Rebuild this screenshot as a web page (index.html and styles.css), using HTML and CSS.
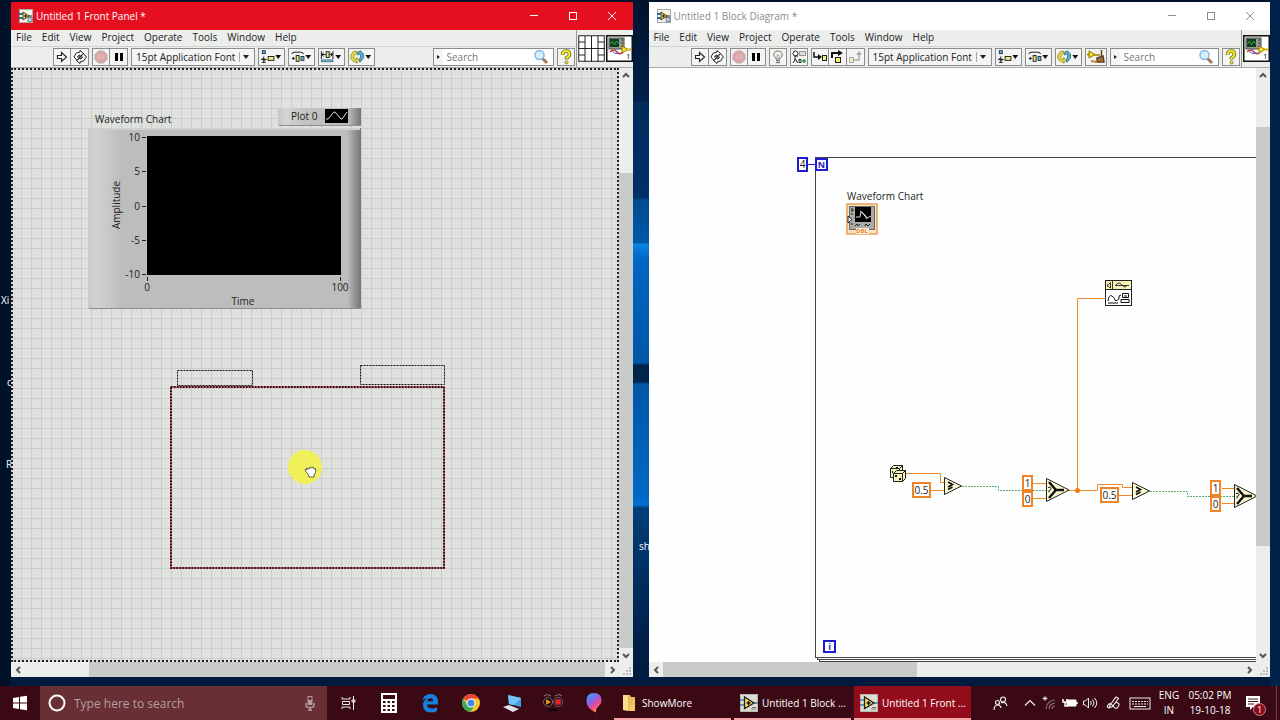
FILE: index.html
```
<!DOCTYPE html>
<html lang="en">
<head>
    <meta charset="UTF-8">
    <meta name="viewport" content="width=device-width, initial-scale=1.0">
    <title>LabVIEW</title>
    <link rel="stylesheet" href="styles.css">
</head>
<body>
    <!-- Shared icons -->
    <svg class="sprites" width="0" height="0" aria-hidden="true">
        <symbol id="vi-small" viewBox="0 0 14 14">
            <rect x="0.5" y="0.5" width="13" height="13" fill="#f4f4e8" stroke="#aaa"/>
            <path d="M0 5h4M0 9h4" stroke="#1d6fa5" stroke-width="2"/>
            <path d="M4 3v8l6-4z" fill="#ffd83a" stroke="#443"/>
            <path d="M5 7h3M6.500 5.500v3M9 7h4" stroke="#222"/>
            <rect x="9" y="8.500" width="4" height="4" fill="#bcd" stroke="#567" stroke-width="0.700"/>
        </symbol>
        <symbol id="run" viewBox="0 0 18 18">
            <path d="M4.500 7.500h4v-3l5 4.500-5 4.500v-3h-4z" fill="#fff" stroke="#222" stroke-width="1.200"/>
        </symbol>
        <symbol id="run-loop" viewBox="0 0 18 18">
            <path d="M3.500 8q1-4 5.500-4V2.500l3.500 3L9 8.500V7Q7 7 6.500 9H9l-3 3.500L3 9zM14.500 10q-1 4-5.500 4v1.500l-3.500-3L9 9.500V11q2 0 2.500-2H9.500l3-3.500L15.500 9z" fill="#fff" stroke="#222"/>
        </symbol>
        <symbol id="abort" viewBox="0 0 18 18">
            <path d="M6.500 3h5l3.500 3.500v5l-3.500 3.500h-5l-3.500-3.500v-5z" fill="#dba4a6" stroke="#bdaaaa"/>
            <path d="M5 9h8M6 7h6M6 11h6" stroke="#e4babb"/>
        </symbol>
        <symbol id="pause" viewBox="0 0 18 18">
            <path d="M5 5h3v8h-3zM10 5h3v8h-3z" fill="#000"/>
        </symbol>
        <symbol id="align" viewBox="0 0 28 18">
            <rect x="4.500" y="2.500" width="3" height="3" fill="#62c8dd" stroke="#234"/>
            <path d="M3 11.500h6M6 8.500v6M4.500 10l3 3M4 14.500h4" stroke="#111"/>
            <rect x="10.500" y="8.500" width="6" height="4" fill="#f4ee78" stroke="#222"/>
            <path d="M18 7h6l-3 4z" fill="#111"/>
        </symbol>
        <symbol id="distribute" viewBox="0 0 28 18">
            <path d="M4 6q0-2 3-2h6q3 0 3 2M4 10.500h3M5.500 9v3" fill="none" stroke="#111"/>
            <rect x="8.500" y="7.500" width="3" height="6" fill="#f4ee78" stroke="#222"/>
            <rect x="13.500" y="8.500" width="3" height="4" fill="#62c8dd" stroke="#234"/>
            <path d="M18 7h6l-3 4z" fill="#111"/>
        </symbol>
        <symbol id="resize" viewBox="0 0 28 18">
            <path d="M3.500 3v8M15.500 3v8M4 6.500h4M11 6.500h4M6 4.500l-2 2 2 2M13 4.500l2 2-2 2" fill="none" stroke="#111"/>
            <rect x="8.500" y="3.500" width="3" height="6" fill="#f4ee78" stroke="#222"/>
            <rect x="3.500" y="12" width="12" height="2" fill="#62c8dd" stroke="#356" stroke-width="0.700"/>
            <path d="M18 7h6l-3 4z" fill="#111"/>
        </symbol>
        <symbol id="reorder" viewBox="0 0 28 18">
            <path d="M9 3h-3l-3 4v4l3 3h3v1.500l2.500-3-2.500-3v2h-2l-1-2v-2l3-2z" fill="#e9df3c" stroke="#877d22" stroke-width="0.800"/>
            <path d="M10 4l3-1.500 3 3.500v4l-3 4h-1v-3l1-2v-2l-1-1-2 1z" fill="#4fb0c8" stroke="#286a7c" stroke-width="0.800"/>
            <path d="M18 7h6l-3 4z" fill="#111"/>
        </symbol>
        <symbol id="magnifier" viewBox="0 0 16 16">
            <path d="M9 9l5 5" stroke="#a87455" stroke-width="3"/>
            <circle cx="6.500" cy="6" r="4.500" fill="#d7effb" stroke="#83b7dc" stroke-width="1.500"/>
        </symbol>
        <symbol id="help" viewBox="0 0 18 18">
            <path d="M5.500 7q0-4 3.500-4t3.500 3.200q0 1.800-3 3.800v1.500" fill="none" stroke="#6c6c20" stroke-width="3.600"/>
            <path d="M5.500 7q0-4 3.500-4t3.500 3.200q0 1.800-3 3.800v1" fill="none" stroke="#f4ec26" stroke-width="2"/>
            <circle cx="9.500" cy="14.500" r="1.500" fill="#f4ec26" stroke="#6c6c20" stroke-width="0.800"/>
        </symbol>
        <symbol id="vi-icon" viewBox="0 0 27 27">
            <rect x="0.750" y="0.750" width="25.500" height="25.500" fill="#fff" stroke="#111" stroke-width="1.500"/>
            <rect x="3" y="3" width="15" height="11" fill="#9b9f93" stroke="#444"/>
            <rect x="4" y="4" width="9" height="8" fill="#0d3b1b"/>
            <path d="M4.500 9l2-3 2 4 2-4 2 3" fill="none" stroke="#35a83f"/>
            <path d="M15 5h2M15 8h2M15 11h2" stroke="#333"/>
            <path d="M4 17q4-4 7 0t7-1" fill="none" stroke="#d33c44" stroke-width="1.500"/>
            <path d="M6 15q2 5 8 3" fill="none" stroke="#4a61c4"/>
            <path d="M16 11v7l6-3.500z" fill="#ffe02a" stroke="#997a00"/>
            <path d="M21 14.500h4" stroke="#d8b400" stroke-width="2"/>
        </symbol>
        <symbol id="lv-task" viewBox="0 0 18 18">
            <rect x="0.500" y="0.500" width="17" height="17" fill="#deded4" stroke="#b7b7ae"/>
            <path d="M0 6h5M0 11h5M13 9h5" stroke="#3c83ad" stroke-width="1.500"/>
            <path d="M4.500 3v11.500l9.500-5.500z" fill="#ffdf60" stroke="#222" stroke-width="1.300"/>
            <path d="M6.500 9h4M8.500 7v4" stroke="#111" stroke-width="1.500"/>
            <path d="M11 15h5M12 13.500h4" stroke="#777"/>
        </symbol>
        <symbol id="caret-up" viewBox="0 0 14 14"><path d="M4 9l3-3 3 3" fill="none" stroke="#555" stroke-width="2"/></symbol>
        <symbol id="caret-down" viewBox="0 0 14 14"><path d="M4 6l3 3 3-3" fill="none" stroke="#555" stroke-width="2"/></symbol>
        <symbol id="caret-left" viewBox="0 0 14 14"><path d="M9 5l-3 3 3 3" fill="none" stroke="#555" stroke-width="2"/></symbol>
        <symbol id="caret-right" viewBox="0 0 14 14"><path d="M6 5l3 3-3 3" fill="none" stroke="#555" stroke-width="2"/></symbol>
        <symbol id="minimize" viewBox="0 0 10 10"><path d="M1 4.500h8" stroke="currentColor"/></symbol>
        <symbol id="maximize" viewBox="0 0 10 10"><rect x="1.500" y="1.500" width="7" height="7" fill="none" stroke="currentColor"/></symbol>
        <symbol id="close" viewBox="0 0 10 10"><path d="M1 1l8 8M9 1l-8 8" stroke="currentColor"/></symbol>
        <symbol id="compare" viewBox="0 0 18 18">
            <path d="M0.500 0.500l17 8.500-17 8.500z" fill="#fbf9cf" stroke="#222"/>
            <path d="M4 5l4.500 2.500-4.500 2.500M4 12.500l4.500-2.500" fill="none" stroke="#111" stroke-width="1.600"/>
        </symbol>
        <symbol id="select-node" viewBox="0 0 24 24">
            <path d="M0.500 0.500l22.500 11.500-22.500 11.500z" fill="#fbf9cf" stroke="#222"/>
            <path d="M3 4l7 8M3 20l7-8M8 12h10" fill="none" stroke="#111" stroke-width="2.500"/>
            <path d="M2 9.500q3-1 3 1t-2 2v2" fill="none" stroke="#222"/>
        </symbol>
    </svg>

    <main class="desktop">
        <span class="desktop-label label-xi">Xi</span>
        <span class="desktop-label label-c">c</span>
        <span class="desktop-label label-r">R</span>
        <span class="desktop-label label-sh">sh</span>

        <!-- Front panel -->
        <section class="window active">
            <header class="titlebar">
                <svg class="title-icon"><use href="#vi-small"/></svg>
                <h1>Untitled 1 Front Panel *</h1>
                <button aria-label="Minimize"><svg><use href="#minimize"/></svg></button>
                <button aria-label="Maximize"><svg><use href="#maximize"/></svg></button>
                <button aria-label="Close"><svg><use href="#close"/></svg></button>
            </header>
            <div class="window-head">
                <div class="bars">
                    <nav class="menubar">
                        <button>File</button>
                        <button>Edit</button>
                        <button>View</button>
                        <button>Project</button>
                        <button>Operate</button>
                        <button>Tools</button>
                        <button>Window</button>
                        <button>Help</button>
                    </nav>
                    <div class="toolbar">
                        <div class="tool-group">
                            <button class="tool" aria-label="Run"><svg><use href="#run"/></svg></button>
                            <button class="tool" aria-label="Run continuously"><svg><use href="#run-loop"/></svg></button>
                        </div>
                        <div class="tool-group">
                            <button class="tool" aria-label="Abort"><svg><use href="#abort"/></svg></button>
                            <button class="tool" aria-label="Pause"><svg><use href="#pause"/></svg></button>
                        </div>
                        <div class="font-box">
                            <select aria-label="Text settings"><option>15pt Application Font</option></select>
                        </div>
                        <button class="tool wide" aria-label="Align objects"><svg><use href="#align"/></svg></button>
                        <button class="tool wide" aria-label="Distribute objects"><svg><use href="#distribute"/></svg></button>
                        <button class="tool wide" aria-label="Resize objects"><svg><use href="#resize"/></svg></button>
                        <button class="tool wide" aria-label="Reorder"><svg><use href="#reorder"/></svg></button>
                        <div class="search-box">
                            <span class="search-arrow"></span>
                            <input type="search" placeholder="Search" aria-label="Search">
                            <svg><use href="#magnifier"/></svg>
                        </div>
                        <button class="tool" aria-label="Context help"><svg><use href="#help"/></svg></button>
                    </div>
                </div>
                <div class="icon-pane">
                    <svg viewBox="0 0 27 27">
                        <rect x="0.750" y="0.750" width="25.500" height="25.500" fill="#fff" stroke="#222"/>
                        <path d="M7 1v26M13.500 1v26M20 1v26M1 13.500h26M1 7h6M1 20h6M20 7h6M20 20h6" stroke="#222"/>
                    </svg>
                    <svg viewBox="0 0 27 27">
                        <use href="#vi-icon"/>
                        <text x="20" y="24" class="vi-number">1</text>
                    </svg>
                </div>
            </div>
            <div class="work">
                <div class="canvas panel-canvas">
                    <svg class="sheet">
                        <defs>
                            <linearGradient id="bevel" x1="0" x2="1" y1="0" y2="0">
                                <stop offset="0" stop-color="#c9cbc8"/>
                                <stop offset="0.030" stop-color="#d0d2cf"/>
                                <stop offset="0.080" stop-color="#c6c8c6"/>
                                <stop offset="0.120" stop-color="#bcbebc"/>
                                <stop offset="0.950" stop-color="#bcbebc"/>
                                <stop offset="0.980" stop-color="#8f918f"/>
                                <stop offset="1" stop-color="#747674"/>
                            </linearGradient>
                            <linearGradient id="bevel-legend" x1="0" x2="1" y1="0" y2="0">
                                <stop offset="0" stop-color="#c5c7c4"/>
                                <stop offset="0.100" stop-color="#d3d5d2"/>
                                <stop offset="0.300" stop-color="#c2c4c1"/>
                                <stop offset="0.850" stop-color="#b9bbb9"/>
                                <stop offset="1" stop-color="#747674"/>
                            </linearGradient>
                        </defs>

                        <text x="84" y="55">Waveform Chart</text>

                        <!-- plot legend -->
                        <rect x="267" y="40" width="83" height="18" fill="url(#bevel-legend)"/>
                        <path d="M268 57.500h82" stroke="#8f918f"/>
                        <text x="280" y="52">Plot 0</text>
                        <rect x="314" y="41" width="23" height="14" fill="#000"/>
                        <path d="M315 51l2 0 6-7 1 0 6 7 1 0 5-7" fill="none" stroke="#ddd"/>

                        <!-- chart -->
                        <rect x="77" y="60" width="273" height="181" fill="url(#bevel)"/>
                        <path d="M79 61h270" stroke="#cfd1cf" stroke-width="2"/>
                        <path d="M78 240.500h272" stroke="#8d8f8d"/>
                        <rect x="136" y="68" width="194" height="139" fill="#000"/>
                        <path d="M131 69.500h4M131 103.500h4M131 138.500h4M131 172.500h4M131 206.500h4M136.500 209v4M329.500 209v4" stroke="#222"/>
                        <g text-anchor="end">
                            <text x="129" y="73">10</text>
                            <text x="129" y="107">5</text>
                            <text x="129" y="142">0</text>
                            <text x="129" y="176">-5</text>
                            <text x="129" y="210">-10</text>
                        </g>
                        <g text-anchor="middle">
                            <text x="136" y="223">0</text>
                            <text x="329" y="223">100</text>
                            <text x="232" y="237">Time</text>
                            <text transform="translate(109 137) rotate(-90)">Amplitude</text>
                        </g>

                        <!-- outline of the chart being dragged -->
                        <g fill="none" stroke="#111" stroke-dasharray="2 1">
                            <rect x="166.500" y="302.500" width="75" height="15"/>
                            <rect x="349.500" y="297.500" width="84" height="19"/>
                        </g>
                        <rect x="160" y="319" width="273" height="181" fill="none" stroke="#c4616a" stroke-width="2"/>
                        <rect x="160" y="319" width="273" height="181" fill="none" stroke="#221012" stroke-width="2" stroke-dasharray="1.500 1.500"/>

                        <circle cx="294" cy="399" r="17" fill="#f0f05a"/>
                        <path d="M295 404q-2-3 0-3l1 1v-2l2 1 1-2 2 1 1-1 1 2 2 0q0 4-2 6v2h-5q0-3-3-5z" fill="#fff" stroke="#333" stroke-width="0.800"/>
                    </svg>
                </div>
                <div class="vscroll">
                    <button aria-label="Scroll up"><svg><use href="#caret-up"/></svg></button>
                    <div class="track"><span class="gap-left-v"></span><span class="thumb fill"></span></div>
                    <button aria-label="Scroll down"><svg><use href="#caret-down"/></svg></button>
                </div>
            </div>
            <div class="hscroll">
                <button aria-label="Scroll left"><svg><use href="#caret-left"/></svg></button>
                <div class="track"><span class="gap-left-h"></span><span class="thumb fill"></span></div>
                <button aria-label="Scroll right"><svg><use href="#caret-right"/></svg></button>
                <svg class="grip" viewBox="0 0 14 14"><path d="M10 5h2v2h-2zM7 8h2v2h-2zM10 8h2v2h-2zM4 11h2v2h-2zM7 11h2v2h-2zM10 11h2v2h-2z" fill="#bbb"/></svg>
            </div>
        </section>

        <!-- Block diagram -->
        <section class="window">
            <header class="titlebar">
                <svg class="title-icon"><use href="#vi-small"/></svg>
                <h1>Untitled 1 Block Diagram *</h1>
                <button aria-label="Minimize"><svg><use href="#minimize"/></svg></button>
                <button aria-label="Maximize"><svg><use href="#maximize"/></svg></button>
                <button aria-label="Close"><svg><use href="#close"/></svg></button>
            </header>
            <div class="window-head">
                <div class="bars">
                    <nav class="menubar">
                        <button>File</button>
                        <button>Edit</button>
                        <button>View</button>
                        <button>Project</button>
                        <button>Operate</button>
                        <button>Tools</button>
                        <button>Window</button>
                        <button>Help</button>
                    </nav>
                    <div class="toolbar">
                        <div class="tool-group">
                            <button class="tool" aria-label="Run"><svg><use href="#run"/></svg></button>
                            <button class="tool" aria-label="Run continuously"><svg><use href="#run-loop"/></svg></button>
                        </div>
                        <div class="tool-group">
                            <button class="tool" aria-label="Abort"><svg><use href="#abort"/></svg></button>
                            <button class="tool" aria-label="Pause"><svg><use href="#pause"/></svg></button>
                        </div>
                        <button class="tool" aria-label="Highlight execution">
                            <svg viewBox="0 0 18 18">
                                <path d="M7 11q0-1-2-3-1-5 4-5t4 5q-2 2-2 3z" fill="#f3f3ea" stroke="#777"/>
                                <path d="M7 12.500h4M7 14.500h4" stroke="#888" stroke-width="1.500"/>
                                <path d="M8 10l0-3h2v3" fill="none" stroke="#aaa"/>
                            </svg>
                        </button>
                        <button class="tool" aria-label="Retain wire values">
                            <svg viewBox="0 0 18 18">
                                <circle cx="5.500" cy="5.500" r="2.500" fill="#fff" stroke="#222"/>
                                <rect x="9.500" y="3.500" width="6" height="4" fill="#ddd" stroke="#999"/>
                                <path d="M5 8v4M3 15l2.500-4 2 4M9 11.500h2v3h-2zM5 8h3" fill="none" stroke="#222"/>
                                <path d="M12 13h4M14 11v4" stroke="#2d9f3c" stroke-width="1.500"/>
                            </svg>
                        </button>
                        <div class="tool-group">
                            <button class="tool" aria-label="Step into">
                                <svg viewBox="0 0 18 18">
                                    <path d="M3 4v5h5" fill="none" stroke="#111" stroke-width="1.500"/><path d="M7 6l4 3-4 3z" fill="#111"/>
                                    <rect x="11.500" y="7.500" width="4" height="5" fill="#f4ee78" stroke="#222"/>
                                </svg>
                            </button>
                            <button class="tool" aria-label="Step over">
                                <svg viewBox="0 0 18 18">
                                    <path d="M4 10v-5h7" fill="none" stroke="#111" stroke-width="2"/><path d="M10 2l5 3-5 3z" fill="#111"/>
                                    <rect x="7.500" y="9.500" width="5" height="5" fill="#f4ee78" stroke="#222"/>
                                </svg>
                            </button>
                            <button class="tool" aria-label="Step out">
                                <svg viewBox="0 0 18 18">
                                    <path d="M8 12h5v-6" fill="none" stroke="#aaa" stroke-width="1.500"/><path d="M10 7l3-4 3 4z" fill="#aaa"/>
                                    <rect x="3.500" y="9.500" width="4" height="5" fill="#eeeabf" stroke="#aaa"/>
                                </svg>
                            </button>
                        </div>
                        <div class="font-box">
                            <select aria-label="Text settings"><option>15pt Application Font</option></select>
                        </div>
                        <button class="tool wide" aria-label="Align objects"><svg><use href="#align"/></svg></button>
                        <button class="tool wide" aria-label="Distribute objects"><svg><use href="#distribute"/></svg></button>
                        <button class="tool wide" aria-label="Reorder"><svg><use href="#reorder"/></svg></button>
                        <button class="tool cleanup" aria-label="Clean up diagram">
                            <svg viewBox="0 0 22 18">
                                <path d="M4 3v7l6-3.500z" fill="#ffe02a" stroke="#8b7200"/>
                                <path d="M2 6.500h3M9 7h6" stroke="#a58400" stroke-width="1.500"/>
                                <path d="M16.500 2l0 7M12 10l6-2 1 6h-7z" fill="#9a7445" stroke="#5d4020" stroke-width="1.500"/>
                                <path d="M6 13l6 1" stroke="#c08a4a" stroke-width="2"/>
                            </svg>
                        </button>
                        <div class="search-box">
                            <span class="search-arrow"></span>
                            <input type="search" placeholder="Search" aria-label="Search">
                            <svg><use href="#magnifier"/></svg>
                        </div>
                        <button class="tool" aria-label="Context help"><svg><use href="#help"/></svg></button>
                    </div>
                </div>
                <div class="icon-pane">
                    <svg viewBox="0 0 27 27">
                        <use href="#vi-icon"/>
                        <text x="20" y="24" class="vi-number">1</text>
                    </svg>
                </div>
            </div>
            <div class="work">
                <div class="canvas">
                    <svg class="sheet">
                        <!-- for loop -->
                        <g fill="#fdfefd" stroke="#444">
                            <rect x="170.500" y="93.500" width="900" height="500"/>
                            <rect x="168.500" y="91.500" width="900" height="500"/>
                            <rect x="166.500" y="89.500" width="900" height="500"/>
                        </g>
                        <path d="M159 96.500h8" stroke="#1c1ccc"/>
                        <g fill="#fff" stroke="#1c1ccc" stroke-width="2">
                            <rect x="149" y="90" width="9" height="13"/>
                            <rect x="167" y="91" width="11" height="11"/>
                            <rect x="175" y="573" width="11" height="11"/>
                        </g>
                        <g text-anchor="middle">
                            <text x="153.500" y="100">4</text>
                            <text class="terminal" x="172.500" y="100">N</text>
                            <text class="terminal" x="180.500" y="582">i</text>
                        </g>

                        <!-- chart terminal -->
                        <text x="198" y="132">Waveform Chart</text>
                        <rect x="198" y="136" width="30" height="30" fill="#fbe3bf" stroke="#e8a055" stroke-width="1.500"/>
                        <rect x="200.500" y="138.500" width="25" height="23" fill="#aaa" stroke="#666"/>
                        <rect x="206" y="139" width="16" height="15" fill="#000"/>
                        <path d="M207 149h4l1-5 4 3 2 3 4-2M211 143l3 2 4 6" fill="none" stroke="#ddd"/>
                        <path d="M199 148l4 3.500-4 3.500z" fill="#fff" stroke="#222"/>
                        <path d="M202 141h2v2h-2M202 146h2M202 156h2M206 158l2-2 1 2 2-2M216 158l1-2 2 2 2-2" fill="none" stroke="#222"/>
                        <rect x="207" y="160" width="13" height="6" fill="#fdefd8"/>
                        <text class="dbl" x="213" y="165" text-anchor="middle">DBL</text>

                        <!-- express vi -->
                        <rect x="456.500" y="212.500" width="26" height="25" fill="#fff" stroke="#222"/>
                        <rect x="456.500" y="212.500" width="26" height="9" fill="#f6f3b4" stroke="#222"/>
                        <path d="M463.500 213v8M461.500 214.500l-2 2h-1v2h1l2 1.500zM466 217.500h14M467 217q3-4 6 0t5 0" fill="none" stroke="#333"/>
                        <path d="M459 233q1-7 4-5t3 4 4-1v-3l2-1M459 235h10M473.500 225.500h6v4h-6zM472 231.500h8v3h-8zM475 228h3" fill="none" stroke="#111"/>

                        <!-- numeric wires -->
                        <g fill="none" stroke="#f08a2c">
                            <path d="M257 405.500h34.500v9h4"/>
                            <path d="M282 422.500h13M384 415.500h14M384 430.500h14"/>
                            <path d="M420 422.500h28.500v-6h25v3h10M428.500 422v-191.500h28"/>
                            <path d="M470 427.500h13M573 420.500h13M573 435.500h13"/>
                        </g>
                        <circle cx="428.500" cy="422.500" r="2.500" fill="#f07a18"/>

                        <!-- boolean wires -->
                        <g fill="none" stroke="#5cab6c" stroke-dasharray="2 1">
                            <path d="M313 418.500h36.500v4h48"/>
                            <path d="M501 423.500h37.500v5h48"/>
                        </g>

                        <!-- random number -->
                        <g fill="#f5f2bd" stroke="#222">
                            <path d="M241.500 400.500l3-3h9v9l-3 3h-9z"/>
                            <path d="M241.500 400.500h9v9M250.500 400.500l3-3" fill="none"/>
                            <path d="M244.500 405.500l3-3h9v8l-3 3h-9z"/>
                            <path d="M244.500 405.500h9v8M253.500 405.500l3-3" fill="none"/>
                        </g>
                        <path d="M246 407h2v2h-2zM250 410h2v2h-2zM247 399h2v1h-2zM243 403h1v2h-1z" fill="#111"/>

                        <!-- constants -->
                        <g fill="#fff" stroke="#ee8425" stroke-width="2">
                            <rect x="264" y="415" width="17" height="14"/>
                            <rect x="452" y="420" width="17" height="14"/>
                            <rect x="374" y="408" width="9" height="14"/>
                            <rect x="374" y="424" width="9" height="14"/>
                            <rect x="562" y="413" width="9" height="14"/>
                            <rect x="562" y="429" width="9" height="14"/>
                        </g>
                        <g text-anchor="middle">
                            <text x="272.500" y="426">0.5</text>
                            <text x="460.500" y="431">0.5</text>
                            <text x="378.500" y="419">1</text>
                            <text x="378.500" y="435">0</text>
                            <text x="566.500" y="424">1</text>
                            <text x="566.500" y="440">0</text>
                        </g>

                        <use href="#compare" x="295" y="409" width="18" height="18"/>
                        <use href="#compare" x="483" y="414" width="18" height="18"/>
                        <use href="#select-node" x="397" y="410" width="24" height="24"/>
                        <use href="#select-node" x="585" y="416" width="24" height="24"/>
                    </svg>
                </div>
                <div class="vscroll">
                    <button aria-label="Scroll up"><svg><use href="#caret-up"/></svg></button>
                    <div class="track"><span class="gap-right-v"></span><span class="thumb thumb-right-v"></span></div>
                    <button aria-label="Scroll down"><svg><use href="#caret-down"/></svg></button>
                </div>
            </div>
            <div class="hscroll">
                <button aria-label="Scroll left"><svg><use href="#caret-left"/></svg></button>
                <div class="track"><span class="thumb thumb-right-h"></span></div>
                <button aria-label="Scroll right"><svg><use href="#caret-right"/></svg></button>
                <svg class="grip" viewBox="0 0 14 14"><path d="M10 5h2v2h-2zM7 8h2v2h-2zM10 8h2v2h-2zM4 11h2v2h-2zM7 11h2v2h-2zM10 11h2v2h-2z" fill="#bbb"/></svg>
            </div>
        </section>
    </main>

    <footer class="taskbar">
        <button class="start" aria-label="Start">
            <svg viewBox="0 0 16 16"><path d="M1 3l6-1v5.500H1zM8 1.800l7-1v6.700H8zM1 8.500h6V14l-6-1zM8 8.500h7v6.700l-7-1z" fill="#fff"/></svg>
        </button>
        <div class="task-search">
            <svg viewBox="0 0 18 18"><circle cx="9" cy="9" r="7.500" fill="none" stroke="#fff" stroke-width="2"/></svg>
            <input type="text" placeholder="Type here to search" aria-label="Type here to search">
            <svg viewBox="0 0 18 18">
                <path d="M7 2.500h4v8h-4z" fill="none" stroke="#b59ca0"/>
                <path d="M7 6h4v5h-4z" fill="#b59ca0"/>
                <path d="M5 9v2q0 2.500 4 2.500t4-2.500v-2M9 14v2M7 16h4" fill="none" stroke="#b59ca0" stroke-width="1.500"/>
            </svg>
        </div>
        <div class="pinned">
            <button aria-label="Task view">
                <svg viewBox="0 0 20 20"><path d="M4 4v2h8v-2M4 16v-2h8v2M4.500 8.500h7v3h-7zM15.500 3v14M14 7h3v2h-3z" fill="none" stroke="#eee"/></svg>
            </button>
            <button aria-label="Calculator">
                <svg viewBox="0 0 20 20">
                    <rect x="2" y="0" width="16" height="20" fill="#fff"/>
                    <path d="M4 2h12v4h-12z" fill="#3a0913"/>
                    <path d="M4 9h2.500M8.500 9h2.500M13 9h2.500M4 13h2.500M8.500 13h2.500M13 13h2.500M4 17h2.500M8.500 17h2.500M13 17h2.500" stroke="#3a0913" stroke-width="2"/>
                </svg>
            </button>
            <button aria-label="Edge">
                <svg viewBox="0 0 20 20"><path d="M2 9q1-8 8.500-8 7.500 0 7.500 8v2.500h-11q0 4 5 4 3 0 5-1.500v4q-2 1.500-6 1.500-8 0-8-8 0-4 4-6-5 0-5 3.500zM7.200 8.300h6q0-3-3-3-2.500 0-3 3z" fill="#1580dd" fill-rule="evenodd"/></svg>
            </button>
            <button aria-label="Chrome">
                <svg viewBox="0 0 20 20">
                    <circle cx="10" cy="10" r="9" fill="#fbc52c"/>
                    <path d="M10 10L2.200 5.500A9 9 0 0 1 17.800 5.500H10z" fill="#e5443a"/>
                    <path d="M2.200 5.500A9 9 0 0 0 9.500 19L14 12l-8 0z" fill="#3aa757"/>
                    <circle cx="10" cy="10" r="4.500" fill="#fff"/><circle cx="10" cy="10" r="3.500" fill="#4387ed"/>
                </svg>
            </button>
            <button aria-label="This PC">
                <svg viewBox="0 0 20 20"><path d="M6 2l13 3v9l-12-3z" fill="#3da3e5"/><path d="M1 14l6-2 10 4-6 3z" fill="#dfe3e7"/><path d="M6 2l13 3-7 7-5-1z" fill="#6fc6f6"/></svg>
            </button>
            <button aria-label="Recorder">
                <svg viewBox="0 0 20 20">
                    <circle cx="5" cy="9" r="4.500" fill="#20090c" stroke="#6f6266"/><circle cx="15" cy="9" r="4.500" fill="#20090c" stroke="#6f6266"/>
                    <path d="M3 6l5 3-5 3z" fill="#f28a24"/><circle cx="15" cy="9" r="3" fill="#e3242a"/>
                    <path d="M1 3q3-3 7 0M12 3q4-3 7 0" fill="none" stroke="#8d7a7d"/>
                    <path d="M3 16q4 2 7-1 3 3 7 1-4 4-7 1-3 3-7-1z" fill="#080305"/>
                </svg>
            </button>
            <button aria-label="Paint 3D">
                <svg viewBox="0 0 20 20">
                    <defs><linearGradient id="drop" x1="0" y1="0" x2="0.600" y2="1"><stop offset="0" stop-color="#25b8ef"/><stop offset="0.450" stop-color="#8b62ea"/><stop offset="0.750" stop-color="#f4488c"/><stop offset="1" stop-color="#ffa038"/></linearGradient></defs>
                    <path d="M10 0q7.500 0 7.500 7.500c0 5-6 6-5.500 12-7-3-9.500-7-9.500-12q0-7.500 7.500-7.500z" fill="url(#drop)"/>
                </svg>
            </button>
        </div>
        <div class="tasks">
            <button class="task">
                <svg viewBox="0 0 18 18"><path d="M3 1h7l1 2h4v13H3z" fill="#e9bd55"/><path d="M3 1h5v16l-5-1z" fill="#f8dc8b"/><path d="M8 17h7V5" fill="#f2cc69"/></svg>
                <span>ShowMore</span>
            </button>
            <button class="task">
                <svg><use href="#lv-task"/></svg>
                <span>Untitled 1 Block ...</span>
            </button>
            <button class="task current">
                <svg><use href="#lv-task"/></svg>
                <span>Untitled 1 Front ...</span>
            </button>
        </div>
        <div class="tray">
            <button class="people" aria-label="People">
                <svg viewBox="0 0 16 16"><path d="M2 15q0-5 4-5 2.500 0 3 3M9 8q5-2 6 3" fill="none" stroke="#eee" stroke-width="1.200"/><circle cx="5.500" cy="7.500" r="2" fill="none" stroke="#eee" stroke-width="1.200"/><circle cx="11" cy="4.500" r="2.500" fill="none" stroke="#eee" stroke-width="1.200"/></svg>
            </button>
            <button aria-label="Show hidden icons">
                <svg viewBox="0 0 16 16"><path d="M3 10.500l5-5 5 5" fill="none" stroke="#eee" stroke-width="1.200"/></svg>
            </button>
            <button aria-label="Network">
                <svg viewBox="0 0 16 16"><path d="M4 14a9 9 0 0 1 9-9M7 14a6 6 0 0 1 6-6M10 14a3 3 0 0 1 3-3" fill="none" stroke="#8e7479" stroke-width="1.200"/><path d="M3 1v5M0.500 3.500h5M1.500 2l3 3M4.500 2l-3 3" stroke="#eee" stroke-width="0.800"/></svg>
            </button>
            <button aria-label="Battery">
                <svg viewBox="0 0 16 16"><path d="M5 5h9v6h-9z" fill="#fff" stroke="#fff"/><path d="M15 7v2M1 4v3h4v-3M3 7v4h3" fill="none" stroke="#fff" stroke-width="1.500"/></svg>
            </button>
            <button aria-label="Volume">
                <svg viewBox="0 0 16 16"><path d="M1.500 6h2l3-3v10l-3-3h-2zM8.500 6q1.500 2 0 4M10.500 4.500q3 3.500 0 7M12.500 3q4.500 5 0 10" fill="none" stroke="#eee"/></svg>
            </button>
            <button class="pen" aria-label="Windows Ink">
                <svg viewBox="0 0 16 16"><path d="M5 10l6-8 2.500 1.500-6 8-3 1zM5 13q-4 0-2-3t5 1 5 1 0-4-3 0" fill="none" stroke="#eee" stroke-width="1.200"/></svg>
            </button>
            <button class="keyboard" aria-label="Touch keyboard">
                <svg viewBox="0 0 22 16"><rect x="1" y="3" width="20" height="11" fill="none" stroke="#eee"/><path d="M3 6.500h16M3 9h16" stroke="#eee" stroke-dasharray="2 1"/><path d="M5 11.500h12" stroke="#eee"/></svg>
            </button>
            <button class="stack language"><span>ENG</span><span>IN</span></button>
            <button class="stack clock"><span>05:02 PM</span><span>19-10-18</span></button>
            <button class="notify" aria-label="Notifications">
                <svg viewBox="0 0 16 16"><path d="M1 1h14v11h-7l-3 3v-3h-4z" fill="#fff"/><path d="M3 4h10M3 6.500h10M3 9h6" stroke="#4b1820"/></svg>
                <span class="badge">1</span>
            </button>
        </div>
    </footer>
</body>
</html>
```

FILE: styles.css
```
:root {
    --chrome: #eceeec;
    --edge: #8b8d8b;
    --thumb: #c9cbc9;
    --accent: #e60f1f;
    --taskbar: #3a0913;
}

* {
    margin: 0;
    padding: 0;
    box-sizing: border-box;
    font-family: "Open Sans", "Noto Sans", sans-serif;
}

body {
    height: 100vh;
    display: flex;
    flex-direction: column;
    overflow: hidden;
    font-size: 10px;
    color: #222;
    background-color: #001a3a;
}

button {
    border: none;
    background: none;
    color: inherit;
    font-size: inherit;
}

svg {
    display: block;
}

.sprites {
    position: absolute;
}

/* Desktop */
.desktop {
    position: relative;
    flex: 1;
    min-height: 0;
    display: flex;
    gap: 16px;
    padding: 2px 10px 9px 11px;
    background:
        linear-gradient(90deg, #001229 0, #001229 11px, transparent 11px, transparent calc(100% - 10px), #00224b calc(100% - 10px)),
        linear-gradient(180deg, #00132d 0, #00204a 100px, #002b5c 103px, #003068 197px, #004a8f 200px, #0059a8 243px, #0a84e4 244px, #0066c4 260px, #0056a6 363px, #00254d 365px, #00254d 382px, #0057a7 384px, #0068c4 495px, #0070d0 505px, #003e79 508px, #00204a 640px, #001a3d 686px);
}

.desktop-label {
    position: absolute;
    color: #fff;
    line-height: 14px;
}

.label-xi {
    left: 1px;
    top: 293px;
}

.label-c {
    left: 7px;
    top: 375px;
}

.label-r {
    left: 6px;
    top: 457px;
}

.label-sh {
    left: 639px;
    top: 539px;
}

/* Windows */
.window {
    position: relative;
    flex: 1;
    min-width: 0;
    display: flex;
    flex-direction: column;
    background-color: var(--chrome);
}

.titlebar {
    height: 28px;
    display: flex;
    align-items: center;
    padding: 0 1px 0 8px;
    background-color: #fff;
    color: #8c8c8c;
}

.active .titlebar {
    background-color: var(--accent);
    color: #fff;
}

.titlebar h1 {
    flex: 1;
    padding-left: 3px;
    font-size: 10px;
    font-weight: 400;
}

.title-icon {
    width: 14px;
    height: 14px;
}

.titlebar button {
    width: 39px;
    height: 28px;
    display: flex;
    align-items: center;
    justify-content: center;
}

.titlebar button svg {
    width: 10px;
    height: 10px;
}

.window-head {
    display: flex;
    height: 38px;
    border-bottom: 1px solid #a9aba9;
}

.bars {
    flex: 1;
    min-width: 0;
}

.menubar {
    display: flex;
    align-items: flex-start;
    height: 17px;
    padding-left: 5px;
    gap: 10px;
    border-bottom: 1px solid #d0d2d0;
}

.menubar button {
    line-height: 15px;
}

.toolbar {
    display: flex;
    align-items: center;
    height: 20px;
    padding: 0 1px 0 42px;
    gap: 3px;
}

.tool-group {
    display: flex;
}

.tool-group .tool + .tool {
    border-left: none;
}

.tool {
    flex: none;
    width: 18px;
    height: 18px;
    display: flex;
    align-items: center;
    justify-content: center;
    border: 1px solid var(--edge);
    background-color: #f3f4f3;
}

.tool svg {
    flex: none;
    width: 18px;
    height: 18px;
}

.wide,
.wide svg {
    width: 27px;
}

.cleanup,
.cleanup svg {
    width: 22px;
}

.font-box {
    position: relative;
    flex: none;
    width: 124px;
    height: 18px;
    border: 1px solid var(--edge);
    background-color: #f3f4f3;
}

.font-box select {
    width: 100%;
    height: 16px;
    padding-left: 4px;
    appearance: none;
    border: none;
    background: none;
    color: #222;
    font-size: 10px;
}

.font-box::before {
    content: "";
    position: absolute;
    right: 14px;
    top: 3px;
    height: 10px;
    border-left: 1px solid #aaa;
}

.font-box::after {
    content: "";
    position: absolute;
    right: 5px;
    top: 6px;
    border: 3px solid transparent;
    border-top: 4px solid #222;
    border-bottom: none;
}

.search-box {
    flex: 0 1 121px;
    min-width: 0;
    display: flex;
    align-items: center;
    height: 18px;
    margin-left: auto;
    border: 1px solid var(--edge);
    background-color: #fff;
}

.search-arrow {
    width: 9px;
    height: 16px;
    flex: none;
    display: flex;
    align-items: center;
    justify-content: center;
    background-color: #f3f4f3;
}

.search-arrow::before {
    content: "";
    border: 2px solid transparent;
    border-left: 3px solid #222;
    border-right: none;
}

.search-box input {
    flex: 1;
    min-width: 0;
    padding-left: 4px;
    border: none;
    background: none;
    font-size: 10px;
}

.search-box input::placeholder {
    color: #777;
}

.search-box svg {
    flex: none;
    width: 16px;
    height: 16px;
    margin-right: 4px;
}

.icon-pane {
    display: flex;
    align-items: center;
    gap: 1px;
    padding-left: 1px;
    border-left: 1px solid #999;
}

.icon-pane svg {
    width: 27px;
    height: 27px;
}

.vi-number {
    font-size: 8px;
    fill: #111;
}

/* Work area */
.work {
    flex: 1;
    min-height: 0;
    display: flex;
}

.canvas {
    position: relative;
    flex: 1;
    min-width: 0;
    overflow: hidden;
    background-color: #fdfefd;
}

.panel-canvas {
    background-color: #dfe1de;
    background-image:
        linear-gradient(90deg, #cbcdca 1px, transparent 1px),
        linear-gradient(180deg, #cbcdca 1px, transparent 1px);
    background-size: 10px 10px;
}

.panel-canvas::after {
    content: "";
    position: absolute;
    inset: 0;
    border: 2px dotted #222;
}

.sheet {
    width: 100%;
    height: 100%;
    font-size: 10px;
    fill: #222;
}

.terminal {
    font-size: 9px;
    font-weight: 700;
    fill: #1c1ccc;
}

.dbl {
    font-size: 6px;
    font-weight: 700;
    fill: #e88a30;
}

/* Scroll bars */
.vscroll {
    width: 14px;
    display: flex;
    flex-direction: column;
}

.hscroll {
    height: 15px;
    display: flex;
}

.vscroll button,
.hscroll button {
    flex: none;
    width: 14px;
    height: 14px;
}

.vscroll svg,
.hscroll svg {
    width: 14px;
    height: 14px;
}

.track {
    flex: 1;
    display: flex;
}

.vscroll .track {
    flex-direction: column;
}

.thumb {
    background-color: var(--thumb);
}

.fill {
    flex: 1;
}

.gap-left-v {
    height: 16%;
}

.gap-left-h {
    width: 11%;
}

.gap-right-v {
    height: 8%;
}

.thumb-right-v {
    height: 74%;
}

.thumb-right-h {
    width: 44%;
}

/* Taskbar */
.taskbar {
    height: 34px;
    display: flex;
    background-color: var(--taskbar);
    color: #fff;
    font-size: 11px;
}

.taskbar button {
    display: flex;
    align-items: center;
    justify-content: center;
}

.start {
    width: 40px;
}

.start svg {
    width: 16px;
    height: 16px;
}

.task-search {
    width: 287px;
    display: flex;
    align-items: center;
    padding: 0 8px;
    background-color: #683035;
}

.task-search svg {
    flex: none;
    width: 18px;
    height: 18px;
}

.task-search input {
    flex: 1;
    min-width: 0;
    padding-left: 8px;
    border: none;
    background: none;
    font-size: 12px;
}

.task-search input::placeholder {
    color: #b99da0;
}

.pinned {
    display: flex;
}

.pinned button {
    width: 41px;
}

.pinned svg {
    width: 20px;
    height: 20px;
}

.tasks {
    display: flex;
    gap: 3px;
}

.taskbar .task {
    width: 117px;
    padding: 2px 6px 0;
    gap: 4px;
    justify-content: flex-start;
    border-bottom: 2px solid #f4a3a8;
    font-size: 10px;
    white-space: nowrap;
}

.task svg {
    flex: none;
    width: 18px;
    height: 18px;
}

.taskbar .current {
    background-color: #920c1b;
}

.tray {
    flex: 1;
    display: flex;
    justify-content: flex-end;
    margin-right: 3px;
    border-right: 1px solid #6d4850;
}

.tray button {
    width: 20px;
}

.tray svg {
    flex: none;
    width: 16px;
    height: 16px;
}

.tray .people {
    width: 40px;
}

.tray .pen {
    width: 26px;
}

.tray .keyboard {
    width: 28px;
}

.tray .keyboard svg {
    width: 22px;
}

.tray .stack {
    flex-direction: column;
    font-size: 10px;
    line-height: 15px;
}

.tray .language {
    width: 30px;
}

.tray .clock {
    width: 52px;
}

.tray .notify {
    position: relative;
    width: 40px;
    padding-right: 6px;
}

.badge {
    position: absolute;
    left: 17px;
    top: 17px;
    width: 13px;
    height: 13px;
    border: 1px solid #c9868e;
    border-radius: 50%;
    background-color: #8c0c1a;
    font-size: 9px;
    line-height: 11px;
}
```
